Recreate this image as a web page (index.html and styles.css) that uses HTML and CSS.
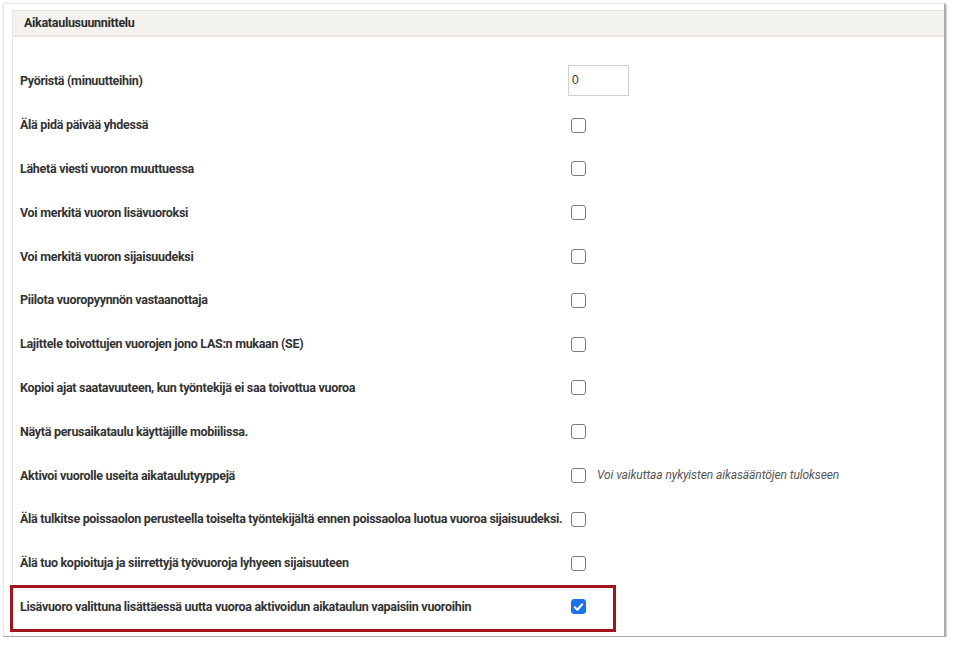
FILE: index.html
```html
<!DOCTYPE html>
<html lang="fi">
<head>
<meta charset="utf-8">
<link rel="stylesheet" href="styles.css">
</head>
<body>
<div class="frame">
  <div class="panel">
    <div class="panel-head">Aikataulusuunnittelu</div>
    <div class="rows">
      <div class="row"><span class="label">Pyöristä (minuutteihin)</span><span class="input">0</span></div>
      <div class="row"><span class="label">Älä pidä päivää yhdessä</span><span class="cb"></span></div>
      <div class="row"><span class="label">Lähetä viesti vuoron muuttuessa</span><span class="cb"></span></div>
      <div class="row"><span class="label">Voi merkitä vuoron lisävuoroksi</span><span class="cb"></span></div>
      <div class="row"><span class="label">Voi merkitä vuoron sijaisuudeksi</span><span class="cb"></span></div>
      <div class="row"><span class="label">Piilota vuoropyynnön vastaanottaja</span><span class="cb"></span></div>
      <div class="row"><span class="label">Lajittele toivottujen vuorojen jono LAS:n mukaan (SE)</span><span class="cb"></span></div>
      <div class="row"><span class="label">Kopioi ajat saatavuuteen, kun työntekijä ei saa toivottua vuoroa</span><span class="cb"></span></div>
      <div class="row"><span class="label">Näytä perusaikataulu käyttäjille mobiilissa.</span><span class="cb"></span></div>
      <div class="row"><span class="label">Aktivoi vuorolle useita aikataulutyyppejä</span><span class="cb"></span><span class="note">Voi vaikuttaa nykyisten aikasääntöjen tulokseen</span></div>
      <div class="row"><span class="label">Älä tulkitse poissaolon perusteella toiselta työntekijältä ennen poissaoloa luotua vuoroa sijaisuudeksi.</span><span class="cb"></span></div>
      <div class="row"><span class="label">Älä tuo kopioituja ja siirrettyjä työvuoroja lyhyeen sijaisuuteen</span><span class="cb"></span></div>
      <div class="row highlight"><span class="label">Lisävuoro valittuna lisättäessä uutta vuoroa aktivoidun aikataulun vapaisiin vuoroihin</span><span class="cb checked"><svg viewBox="0 0 14 14" width="14" height="14"><path d="M3 7.3 L5.8 10 L11 4" fill="none" stroke="#fff" stroke-width="2.2" stroke-linecap="round" stroke-linejoin="round"/></svg></span></div>
    </div>
  </div>
</div>
</body>
</html>
```
FILE: styles.css
```css
html, body {
  margin: 0;
  padding: 0;
  background: #ffffff;
}
body {
  font-family: "Roboto", "Liberation Sans", sans-serif;
  color: #333333;
}
.frame {
  margin: 3px 0 0 3px;
  width: 942px;
  height: 634px;
  border-left: 1px solid #e8e8e8;
  border-top: 1px solid #ececec;
  border-right: 1px solid #a8a8a8;
  border-bottom: 1px solid #a8a8a8;
  box-shadow: 1px 1px 2px #888;
  background: #fff;
  box-sizing: border-box;
  padding: 6px 0 0 8px;
}
.panel {
  border-left: 1px solid #e6e6e6;
  height: 100%;
  box-sizing: border-box;
}
.panel-head {
  height: 27px;
  box-sizing: border-box;
  background: #f4f2ee;
  border-top: 1px solid #e9e6e2;
  border-bottom: 2px solid #ebe6df;
  padding-left: 11px;
  font-size: 12.5px;
  letter-spacing: -0.3px;
  font-weight: bold;
  line-height: 24px;
  color: #2b2b2b;
}
.rows {
  padding-top: 22px;
}
.row {
  height: 43.8px;
  display: flex;
  align-items: center;
  padding-left: 7px;
  box-sizing: border-box;
  position: relative;
}
.label {
  width: 548px;
  flex: none;
  font-size: 12.5px;
  letter-spacing: -0.3px;
  font-weight: bold;
  color: #333;
  white-space: nowrap;
}
.input {
  width: 61px;
  height: 31px;
  box-sizing: border-box;
  border: 1px solid #cfcfcf;
  font-size: 12px;
  line-height: 29px;
  padding-left: 3px;
  color: #333;
  font-family: "Liberation Sans", sans-serif;
}
.cb {
  width: 15px;
  height: 15px;
  box-sizing: border-box;
  border: 1.5px solid #7a7a7a;
  border-radius: 3px;
  margin-left: 3px;
  margin-top: 1px;
  display: flex;
  align-items: center;
  justify-content: center;
}
.cb.checked {
  background: #1a73e8;
  border-color: #1a73e8;
}
.note {
  margin-left: 11px;
  font-style: italic;
  font-size: 12px;
  letter-spacing: -0.1px;
  color: #555;
}
.highlight::after {
  content: "";
  position: absolute;
  left: -3px;
  top: 0;
  width: 606px;
  height: 47px;
  border: 3px solid #a3131a;
  box-sizing: border-box;
}
```
